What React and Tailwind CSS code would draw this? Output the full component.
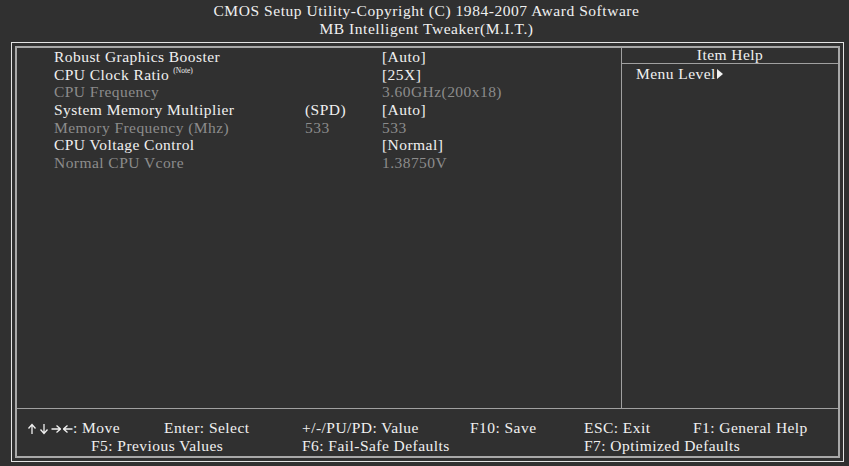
const rows = [
  { label: "Robust Graphics Booster", mid: "", value: "[Auto]", dim: false },
  { label: "CPU Clock Ratio", note: true, mid: "", value: "[25X]", dim: false },
  { label: "CPU Frequency", mid: "", value: "3.60GHz(200x18)", dim: true },
  { label: "System Memory Multiplier", mid: "(SPD)", value: "[Auto]", dim: false },
  { label: "Memory Frequency (Mhz)", mid: "533", value: "533", dim: true },
  { label: "CPU Voltage Control", mid: "", value: "[Normal]", dim: false },
  { label: "Normal CPU Vcore", mid: "", value: "1.38750V", dim: true },
];

// little key arrows drawn in a 10x12 box: up, down, right, left
const arrowPaths = [
  "M5 11 V2 M1.5 5.5 L5 1.5 L8.5 5.5",
  "M5 1 V10 M1.5 6.5 L5 10.5 L8.5 6.5",
  "M0.5 6 H9 M5.5 2.5 L9.5 6 L5.5 9.5",
  "M9.5 6 H1 M4.5 2.5 L0.5 6 L4.5 9.5",
];

export default function App() {
  return (
    <div
      className="h-[466px] w-[849px] overflow-hidden bg-[#303030] text-[15.5px] tracking-[0.45px] text-[#f0f0f0]"
      style={{ fontFamily: '"Liberation Serif", "Times New Roman", serif' }}
    >
      {/* title */}
      <div className="pt-[2px] text-center leading-[18px] tracking-[0.55px]">
        <div className="pl-[4px]">CMOS Setup Utility-Copyright (C) 1984-2007 Award Software</div>
        <div className="pl-[4px]">MB Intelligent Tweaker(M.I.T.)</div>
      </div>

      <div className="ml-[11px] mr-[5px] mt-[4px] h-[420px] border border-[#e4e4e4] p-[3px]">
        <div className="flex h-full flex-col border-2 border-[#a8a8a8]">
          <div className="flex flex-1">
            {/* settings */}
            <div className="w-[605px] border-r border-[#a0a0a0] pl-[37px] leading-[17.7px]">
              {rows.map((row) => (
                <div key={row.label} className={`flex h-[17.7px] ${row.dim ? "text-[#8c8c8c]" : ""}`}>
                  <div className="flex w-[251px] items-start whitespace-nowrap">
                    {row.label}
                    {row.note && (
                      <span className="ml-[4px] mt-[1px] text-[7.5px] leading-none tracking-normal">(Note)</span>
                    )}
                  </div>
                  <div className="w-[77px]">{row.mid}</div>
                  <div>{row.value}</div>
                </div>
              ))}
            </div>
            {/* help */}
            <div className="flex-1 leading-[17.7px]">
              <div className="h-[16px] border-b border-[#a0a0a0] text-center leading-[14px]">Item Help</div>
              <div className="flex items-center pl-[14px] pt-[1px]">
                Menu Level
                <svg width="6" height="10" viewBox="0 0 6 10" className="ml-[1px]">
                  <path d="M0 0 L6 5 L0 10 Z" fill="#f0f0f0" />
                </svg>
              </div>
            </div>
          </div>
          {/* footer */}
          <div className="h-[48px] border-t border-[#a0a0a0] pl-[10px] pt-[10px] leading-[18px]">
            <div className="flex whitespace-nowrap">
              <div className="flex w-[137px] items-center">
                <div className="mt-[1px] flex gap-[2px]">
                  {arrowPaths.map((d) => (
                    <svg key={d} width="10" height="12" viewBox="0 0 10 12">
                      <path d={d} stroke="#f0f0f0" strokeWidth="1.3" fill="none" />
                    </svg>
                  ))}
                </div>
                <span>: Move</span>
              </div>
              <div className="w-[138px]">Enter: Select</div>
              <div className="w-[168px]">+/-/PU/PD: Value</div>
              <div className="w-[114px]">F10: Save</div>
              <div className="w-[109px]">ESC: Exit</div>
              <div>F1: General Help</div>
            </div>
            <div className="flex whitespace-nowrap">
              <div className="w-[64px]" />
              <div className="w-[211px]">F5: Previous Values</div>
              <div className="w-[282px]">F6: Fail-Safe Defaults</div>
              <div>F7: Optimized Defaults</div>
            </div>
          </div>
        </div>
      </div>
    </div>
  );
}
